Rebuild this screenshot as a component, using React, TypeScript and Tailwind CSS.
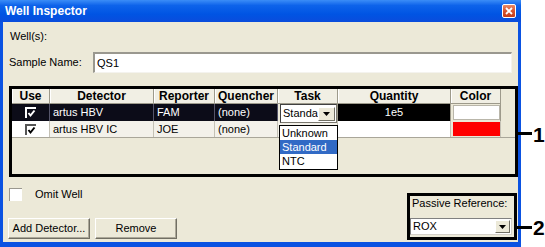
import React from "react";

function Tri() {
  return (
    <svg width="7" height="4" viewBox="0 0 7 4">
      <polygon points="0,0 7,0 3.5,4" fill="#000" />
    </svg>
  );
}

function Check({ color }: { color: string }) {
  return (
    <svg width="9" height="9" viewBox="0 0 9 9">
      <polyline points="1.5,4 3.5,6.5 7.5,1.5" fill="none" stroke={color} strokeWidth="2" />
    </svg>
  );
}

const cols = [38, 104, 61, 63, 60, 113, 50];

export default function App() {
  return (
    <div className="relative w-[545px] h-[247px] bg-white overflow-hidden font-['Liberation_Sans',Arial,sans-serif] text-[11px] text-black">
      {/* window */}
      <div className="flex flex-col w-[521px] h-[247px] bg-[#0a52e2]">
        {/* title bar */}
        <div className="relative h-[22px] flex items-center justify-between pl-[5px] pr-[5px] bg-[linear-gradient(180deg,#3b8df7_0%,#0d63ea_25%,#0054e3_65%,#0a4cdc_100%)]">
          <span className="text-white font-bold text-[12px] leading-none">Well Inspector</span>
          <div className="w-[14px] h-[14px] rounded-[2px] border border-white bg-[linear-gradient(180deg,#e98a66_0%,#d8532e_50%,#c43d1b_100%)] flex items-center justify-center">
            <svg width="8" height="8" viewBox="0 0 8 8">
              <path d="M1 1 L7 7 M7 1 L1 7" stroke="#fff" strokeWidth="1.8" />
            </svg>
          </div>
        </div>
        {/* content */}
        <div className="flex-1 ml-[3px] mr-[3px] mb-[5px] bg-[#ece9d8] flex flex-col pl-[6px] pt-[7px]">
          <div className="h-[14px] leading-[14px] pl-[1px]">Well(s):</div>
          <div className="mt-[9px] flex items-center h-[21px]">
            <span className="w-[84px]">Sample Name:</span>
            <div className="w-[419px] h-[21px] bg-white border-t-2 border-l-2 border-t-[#9a988f] border-l-[#9a988f] border-r border-b border-r-[#f4f3ee] border-b-[#f4f3ee] pl-[2px] leading-[18px]">
              QS1
            </div>
          </div>
          {/* table */}
          <div className="mt-[13px] w-[509px] h-[91px] border-[3px] border-black bg-[#ece9d8]">
            <div className="flex h-[15px]">
              {["Use", "Detector", "Reporter", "Quencher", "Task", "Quantity", "Color"].map((h, i) => (
                <div
                  key={h}
                  style={{ width: cols[i] }}
                  className="h-[15px] bg-[#f1efe4] border-r border-b border-[#9d9a8b] shadow-[inset_1px_0_0_#ffffff] text-center font-bold text-[12px] leading-[14px]"
                >
                  {h}
                </div>
              ))}
            </div>
            {/* row 1 */}
            <div className="flex h-[17px] leading-[16px]">
              <div style={{ width: cols[0] }} className="bg-[#0c0c18] border-r border-[#55556a] flex items-center justify-center">
                <div className="w-[11px] h-[11px] border-t-2 border-l-2 border-white flex items-center justify-center">
                  <Check color="#fff" />
                </div>
              </div>
              <div style={{ width: cols[1] }} className="bg-[#0c0c18] text-white pl-[3px] border-r border-[#55556a]">artus HBV</div>
              <div style={{ width: cols[2] }} className="bg-[#0c0c18] text-white pl-[3px] border-r border-[#55556a]">FAM</div>
              <div style={{ width: cols[3] }} className="bg-[#0c0c18] text-white pl-[3px] border-r border-[#55556a]">(none)</div>
              <div style={{ width: cols[4] }} className="relative bg-[#ece9d8] border-r border-[#9d9a8b]">
                <div className="absolute left-[2px] top-0 w-[57px] h-[19px] bg-white border border-[#7a786f] border-t-[#404040] border-l-[#404040] flex items-center justify-between pl-[2px] pr-[1px] z-10">
                  <span className="leading-none">Standa</span>
                  <div className="w-[17px] h-[14px] bg-[#ece9d8] border border-t-white border-l-white border-r-[#716f64] border-b-[#716f64] flex items-center justify-center">
                    <Tri />
                  </div>
                </div>
                <div className="absolute left-[1px] top-[21px] w-[59px] bg-white border border-black z-20">
                  <div className="h-[14px] leading-[14px] pl-[2px]">Unknown</div>
                  <div className="h-[14px] leading-[14px] pl-[2px] bg-[#316ac5] text-white">Standard</div>
                  <div className="h-[15px] leading-[14px] pl-[2px]">NTC</div>
                </div>
              </div>
              <div style={{ width: cols[5] }} className="bg-black text-white text-center border-r border-[#9d9a8b]">1e5</div>
              <div style={{ width: cols[6] }} className="bg-[#ece9d8] pl-[2px] pt-[1px] border-r border-[#9d9a8b]">
                <div className="w-[47px] h-[15px] bg-white border border-[#b9b6aa]" />
              </div>
            </div>
            {/* row 2 */}
            <div className="flex h-[17px] leading-[16px] border-b border-[#a9a699]">
              <div style={{ width: cols[0] }} className="bg-white border-r border-[#c4c1b5] flex items-center justify-center">
                <div className="w-[11px] h-[11px] border-t-2 border-l-2 border-[#555] flex items-center justify-center">
                  <Check color="#000" />
                </div>
              </div>
              <div style={{ width: cols[1] }} className="bg-[#f3f1ea] pl-[3px] border-r border-[#c4c1b5]">artus HBV IC</div>
              <div style={{ width: cols[2] }} className="bg-[#f3f1ea] pl-[3px] border-r border-[#c4c1b5]">JOE</div>
              <div style={{ width: cols[3] }} className="bg-[#f3f1ea] pl-[3px] border-r border-[#c4c1b5]">(none)</div>
              <div style={{ width: cols[4] }} className="bg-[#f3f1ea] border-r border-[#c4c1b5]" />
              <div style={{ width: cols[5] }} className="bg-white border-r border-[#c4c1b5]" />
              <div style={{ width: cols[6] }} className="bg-[#ece9d8] pl-[2px] pt-[1px] border-r border-[#c4c1b5]">
                <div className="w-[47px] h-[14px] bg-[#ff0000]" />
              </div>
            </div>
          </div>
          {/* bottom */}
          <div className="flex items-start">
            <div className="flex-1 flex flex-col mt-[11px]">
              <div className="flex items-center h-[13px]">
                <div className="w-[13px] h-[13px] bg-white border-t border-l border-[#9a988f]" />
                <span className="ml-[13px] leading-none">Omit Well</span>
              </div>
              <div className="mt-[17px] -ml-[1px] flex gap-[5px]">
                <div className="w-[82px] h-[21px] bg-[#ece9d8] border border-t-white border-l-white border-r-[#716f64] border-b-[#716f64] shadow-[inset_-1px_-1px_0_#aca899] flex items-center justify-center">
                  Add Detector...
                </div>
                <div className="w-[82px] h-[21px] bg-[#ece9d8] border border-t-white border-l-white border-r-[#716f64] border-b-[#716f64] shadow-[inset_-1px_-1px_0_#aca899] flex items-center justify-center">
                  Remove
                </div>
              </div>
            </div>
            <div className="mt-[16px] mr-[1px] w-[110px] h-[47px] border-[3px] border-black flex flex-col">
              <div className="h-[14px] leading-[14px] pl-[2px]">Passive Reference:</div>
              <div className="mt-[8px] w-[102px] h-[17px] bg-white border border-t-[#808080] border-l-[#808080] border-r-[#d4d0c8] border-b-[#d4d0c8] flex items-center justify-between pl-[2px] pr-[1px]">
                <span className="leading-none">ROX</span>
                <div className="w-[15px] h-[13px] bg-[#ece9d8] border border-t-white border-l-white border-r-[#716f64] border-b-[#716f64] flex items-center justify-center">
                  <Tri />
                </div>
              </div>
            </div>
          </div>
        </div>
      </div>
      {/* annotations */}
      <div className="absolute left-[518px] top-[132px] w-[14px] h-[3px] bg-black" />
      <div className="absolute left-[533px] top-[124px] text-[21px] font-bold leading-none">1</div>
      <div className="absolute left-[517px] top-[226px] w-[15px] h-[3px] bg-black" />
      <div className="absolute left-[533px] top-[217px] text-[21px] font-bold leading-none">2</div>
    </div>
  );
}
